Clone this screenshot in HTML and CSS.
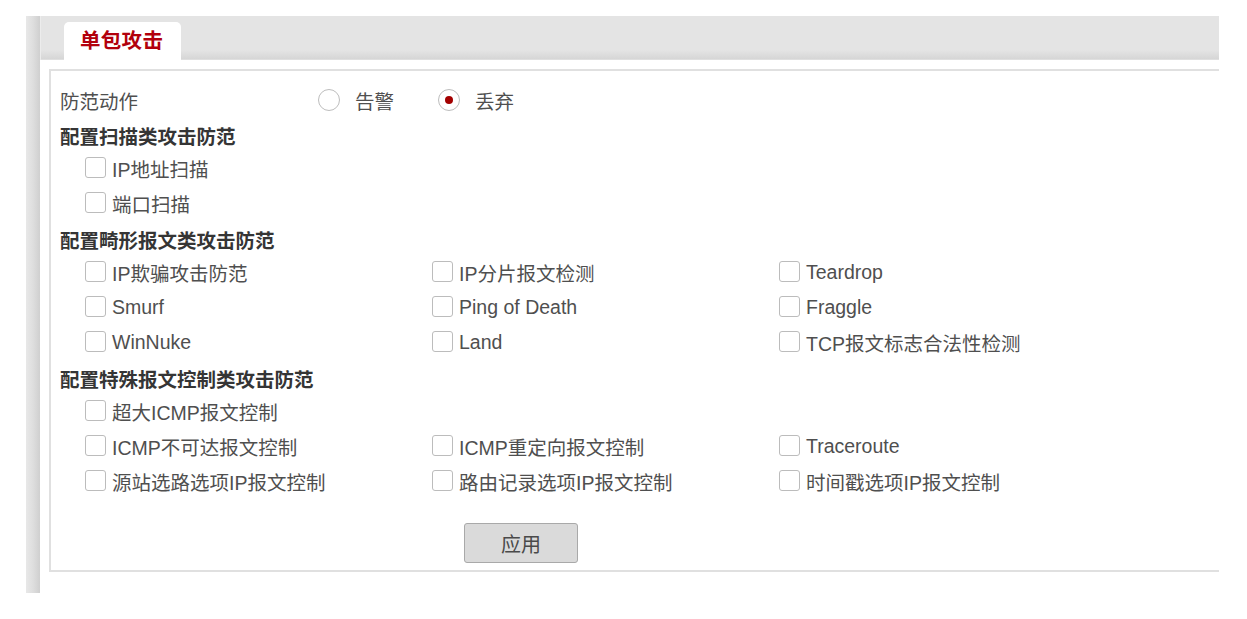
FILE: index.html
```html
<!DOCTYPE html>
<html lang="zh-CN">

<head>
    <meta charset="UTF-8">
    <title>单包攻击</title>
    <link rel="stylesheet" href="styles.css">
</head>

<body>
    <div class="frame">
        <div class="sidebar"></div>
        <div class="main">
            <div class="tabbar">
                <div class="tab">单包攻击</div>
            </div>

            <form class="panel">
                <div class="action-row">
                    <span class="action-label">防范动作</span>
                    <label class="radio"><input type="radio" name="action"><span>告警</span></label>
                    <label class="radio"><input type="radio" name="action" checked><span>丢弃</span></label>
                </div>

                <div class="heading">配置扫描类攻击防范</div>
                <div class="grid">
                    <label class="check"><input type="checkbox"><span>IP地址扫描</span></label>
                </div>
                <div class="grid">
                    <label class="check"><input type="checkbox"><span>端口扫描</span></label>
                </div>

                <div class="heading">配置畸形报文类攻击防范</div>
                <div class="grid">
                    <label class="check"><input type="checkbox"><span>IP欺骗攻击防范</span></label>
                    <label class="check"><input type="checkbox"><span>IP分片报文检测</span></label>
                    <label class="check"><input type="checkbox"><span>Teardrop</span></label>
                </div>
                <div class="grid">
                    <label class="check"><input type="checkbox"><span>Smurf</span></label>
                    <label class="check"><input type="checkbox"><span>Ping of Death</span></label>
                    <label class="check"><input type="checkbox"><span>Fraggle</span></label>
                </div>
                <div class="grid">
                    <label class="check"><input type="checkbox"><span>WinNuke</span></label>
                    <label class="check"><input type="checkbox"><span>Land</span></label>
                    <label class="check"><input type="checkbox"><span>TCP报文标志合法性检测</span></label>
                </div>

                <div class="heading">配置特殊报文控制类攻击防范</div>
                <div class="grid">
                    <label class="check"><input type="checkbox"><span>超大ICMP报文控制</span></label>
                </div>
                <div class="grid">
                    <label class="check"><input type="checkbox"><span>ICMP不可达报文控制</span></label>
                    <label class="check"><input type="checkbox"><span>ICMP重定向报文控制</span></label>
                    <label class="check"><input type="checkbox"><span>Traceroute</span></label>
                </div>
                <div class="grid">
                    <label class="check"><input type="checkbox"><span>源站选路选项IP报文控制</span></label>
                    <label class="check"><input type="checkbox"><span>路由记录选项IP报文控制</span></label>
                    <label class="check"><input type="checkbox"><span>时间戳选项IP报文控制</span></label>
                </div>

                <div class="actions">
                    <button type="button" class="apply">应用</button>
                </div>
            </form>
        </div>
    </div>
</body>

</html>
```

FILE: styles.css
```css
body {
    margin: 0;
    padding: 0;
    background-color: #fff;
    font-family: "Liberation Sans", "Noto Sans CJK SC", sans-serif;
    font-size: 19.5px;
    color: #4f4f4f;
}

.frame {
    display: flex;
    margin: 16px 0 0 26px;
}

.sidebar {
    width: 14px;
    height: 577px;
    background: linear-gradient(to right, #e8e8e8, #dedede 50%, #cfcfcf);
}

.main {
    width: 1179px;
}

.tabbar {
    height: 44px;
    padding-left: 23px;
    box-sizing: border-box;
    display: flex;
    align-items: flex-end;
    background: linear-gradient(to bottom, #e4e4e4 0, #e4e4e4 34px, #d6d6d6 43px, #e8e8e8 44px);
    border-left: 1px solid #ececec;
}

.tab {
    width: 117px;
    height: 38px;
    box-sizing: border-box;
    padding-left: 16px;
    background-color: #fff;
    border-radius: 5px 5px 0 0;
    color: #b2000c;
    font-size: 20.5px;
    font-weight: bold;
    line-height: 38px;
    letter-spacing: 0.3px;
}

.panel {
    margin: 9px 0 0 9px;
    height: 503px;
    box-sizing: border-box;
    padding: 12px 0 0 9px;
    border: 2px solid #e0e0e0;
    border-right: none;
}

.action-row {
    display: flex;
    align-items: center;
    height: 34px;
}

.action-label {
    width: 258px;
}

.radio {
    display: flex;
    align-items: center;
    margin-right: 44px;
}

.radio input {
    appearance: none;
    width: 22px;
    height: 22px;
    margin: 0 15px 0 0;
    border: 1px solid #bdbdbd;
    border-radius: 50%;
    background-color: #fff;
    box-sizing: border-box;
    position: relative;
}

.radio input:checked::after {
    content: "";
    position: absolute;
    top: 6px;
    left: 6px;
    width: 8px;
    height: 8px;
    border-radius: 50%;
    background-color: #a30000;
}

.heading {
    height: 34px;
    box-sizing: border-box;
    padding-top: 6px;
    line-height: 28px;
    font-weight: bold;
    color: #353535;
}

.grid {
    display: grid;
    grid-template-columns: 347px 347px 347px;
    height: 35px;
    padding-left: 25px;
}

.check {
    display: flex;
    align-items: center;
    white-space: nowrap;
}

.check input {
    appearance: none;
    width: 21px;
    height: 21px;
    margin: 0 6px 2px 0;
    border: 1px solid #bcbcbc;
    border-radius: 3px;
    background-color: #fff;
    box-sizing: border-box;
}

.actions {
    padding: 24px 0 0 404px;
}

.apply {
    width: 114px;
    height: 40px;
    background-color: #dadada;
    border: 1px solid #a9a9a9;
    border-radius: 3px;
    font-family: "Liberation Sans", "Noto Sans CJK SC", sans-serif;
    font-size: 20px;
    color: #4a4a4a;
    cursor: pointer;
}
```
